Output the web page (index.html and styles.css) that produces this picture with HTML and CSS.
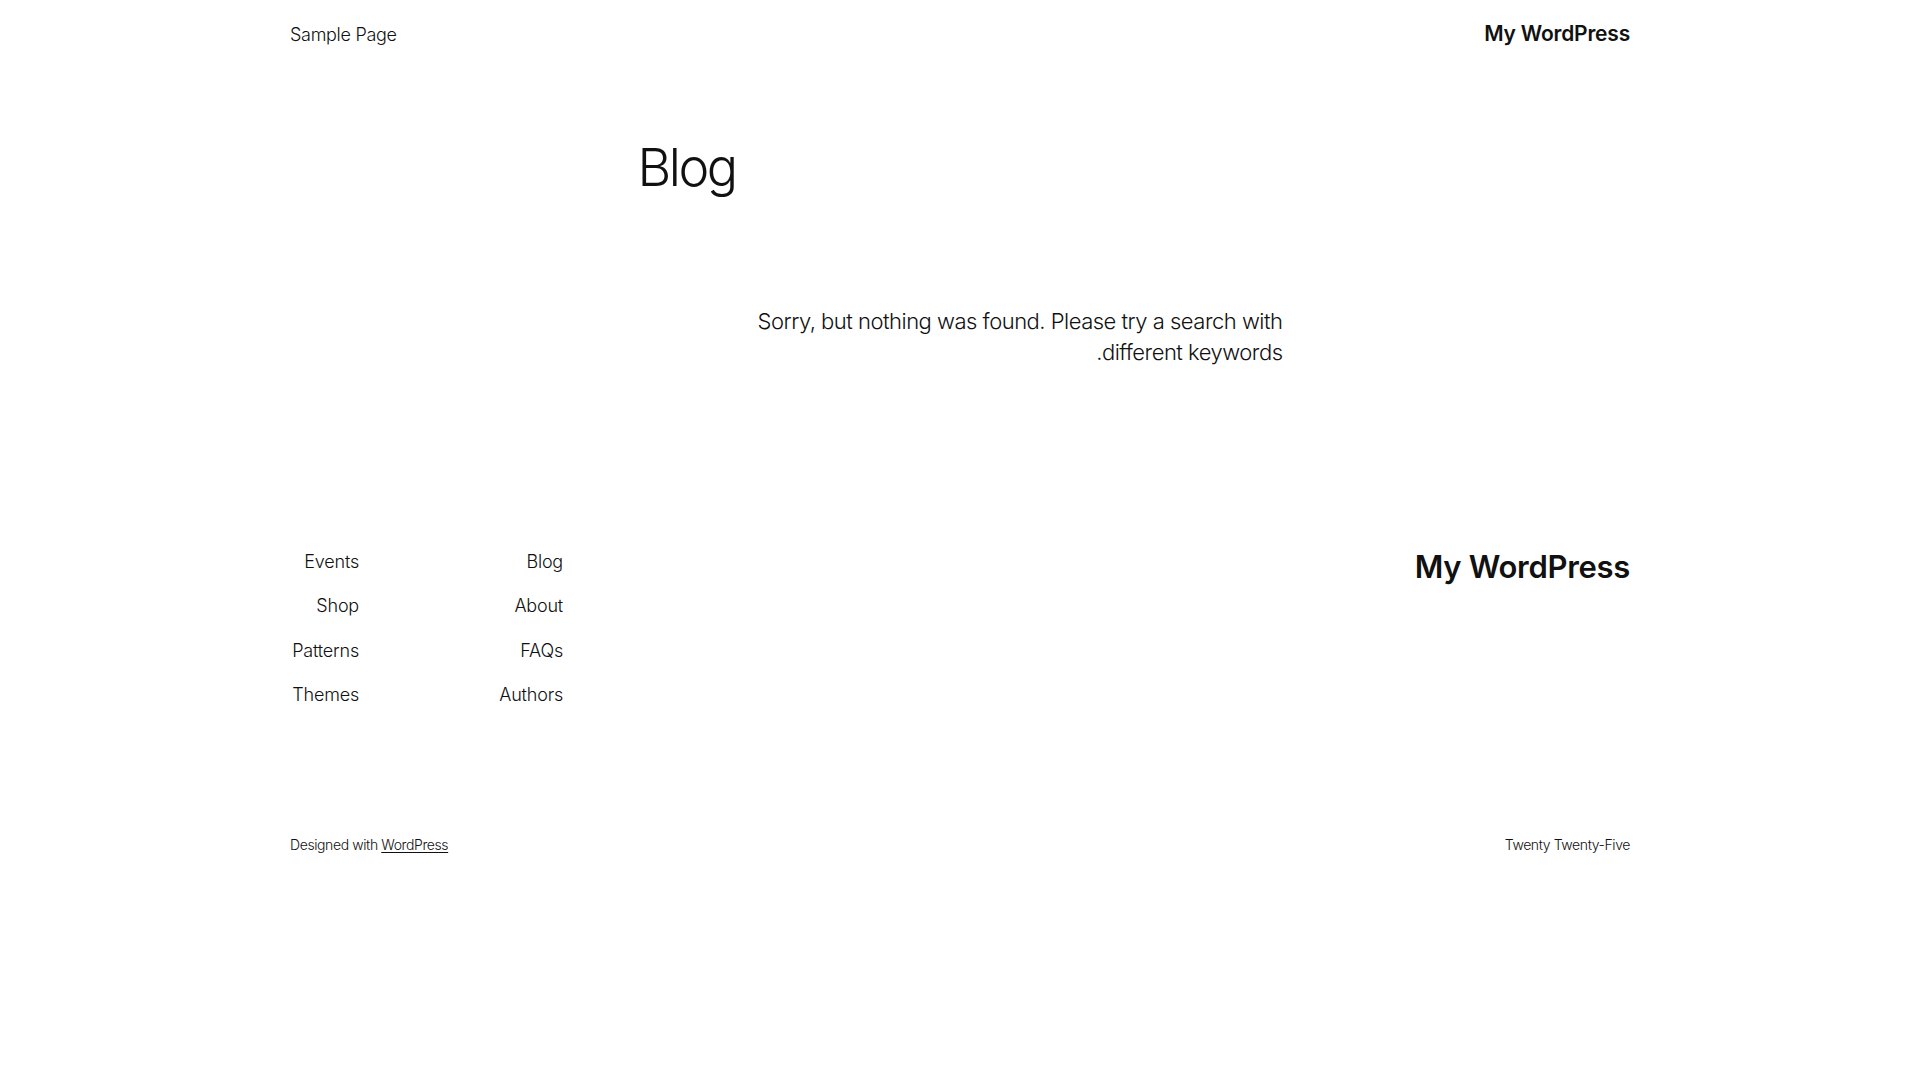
FILE: index.html
```html
<!DOCTYPE html>
<html lang="ar" dir="ltr">
<head>
<meta charset="utf-8">
<title>Blog – My WordPress</title>
<link rel="stylesheet" href="styles.css">
</head>
<body>
<header class="site-header">
  <nav class="header-nav"><a href="#">Sample Page</a></nav>
  <a class="site-title" href="#">My WordPress</a>
</header>
<main class="site-main">
  <h1 class="page-title">Blog</h1>
  <p class="no-results">Sorry, but nothing was found. Please try a search with different keywords.</p>
</main>
<footer class="site-footer">
  <div class="footer-top">
    <div class="footer-navs">
      <ul class="footer-col col-a">
        <li><a href="#">Events</a></li>
        <li><a href="#">Shop</a></li>
        <li><a href="#">Patterns</a></li>
        <li><a href="#">Themes</a></li>
      </ul>
      <ul class="footer-col col-b">
        <li><a href="#">Blog</a></li>
        <li><a href="#">About</a></li>
        <li><a href="#">FAQs</a></li>
        <li><a href="#">Authors</a></li>
      </ul>
    </div>
    <a class="footer-title" href="#">My WordPress</a>
  </div>
  <div class="footer-bottom">
    <p class="credit">Designed with <a href="#">WordPress</a></p>
    <p class="theme-name">Twenty Twenty-Five</p>
  </div>
</footer>
</body>
</html>
```

FILE: styles.css
```css
* { box-sizing: border-box; }
html, body { margin: 0; padding: 0; background: #ffffff; }
body {
  font-family: Inter, "Noto Sans", "Liberation Sans", sans-serif;
  font-weight: 300;
  color: #111111;
  font-size: 18px;
}
a { color: inherit; text-decoration: none; }
p, h1, ul { margin: 0; padding: 0; }
ul { list-style: none; }

.site-header {
  width: 1340px;
  margin: 0 auto;
  height: 68px;
  display: flex;
  align-items: center;
  justify-content: space-between;
}
.header-nav { font-size: 18px; line-height: 25px; letter-spacing: -0.3px; }
.site-title { font-size: 21px; font-weight: 600; line-height: 28px; letter-spacing: -0.2px; }

.site-main {
  width: 645px;
  margin: 0 auto;
  padding-top: 69px;
}
.page-title {
  font-size: 52px;
  font-weight: 300;
  line-height: 62px;
  letter-spacing: -2.5px;
}
.no-results {
  margin-top: 107px;
  margin-left: auto;
  max-width: 560px;
  direction: rtl;
  text-align: right;
  font-size: 22px;
  line-height: 30.8px;
  letter-spacing: -0.5px;
}

.site-footer {
  width: 1340px;
  margin: 181px auto 0;
}
.footer-top {
  display: flex;
  justify-content: space-between;
  align-items: flex-start;
}
.footer-navs { display: flex; gap: 124px; }
.footer-col {
  display: flex;
  flex-direction: column;
  gap: 19.5px;
  text-align: right;
  font-size: 18px;
  line-height: 25px;
  letter-spacing: -0.2px;
}
.col-a { width: 69px; }
.col-b { width: 80px; }
.footer-title {
  font-size: 31px;
  font-weight: 600;
  line-height: 36px;
  letter-spacing: -0.3px;
}
.footer-bottom {
  margin-top: 127px;
  display: flex;
  justify-content: space-between;
  align-items: center;
  font-size: 14px;
  line-height: 21px;
  letter-spacing: -0.4px;
}
.credit a {
  text-decoration: underline;
  text-decoration-thickness: 1px;
  text-underline-offset: 2px;
}
```
